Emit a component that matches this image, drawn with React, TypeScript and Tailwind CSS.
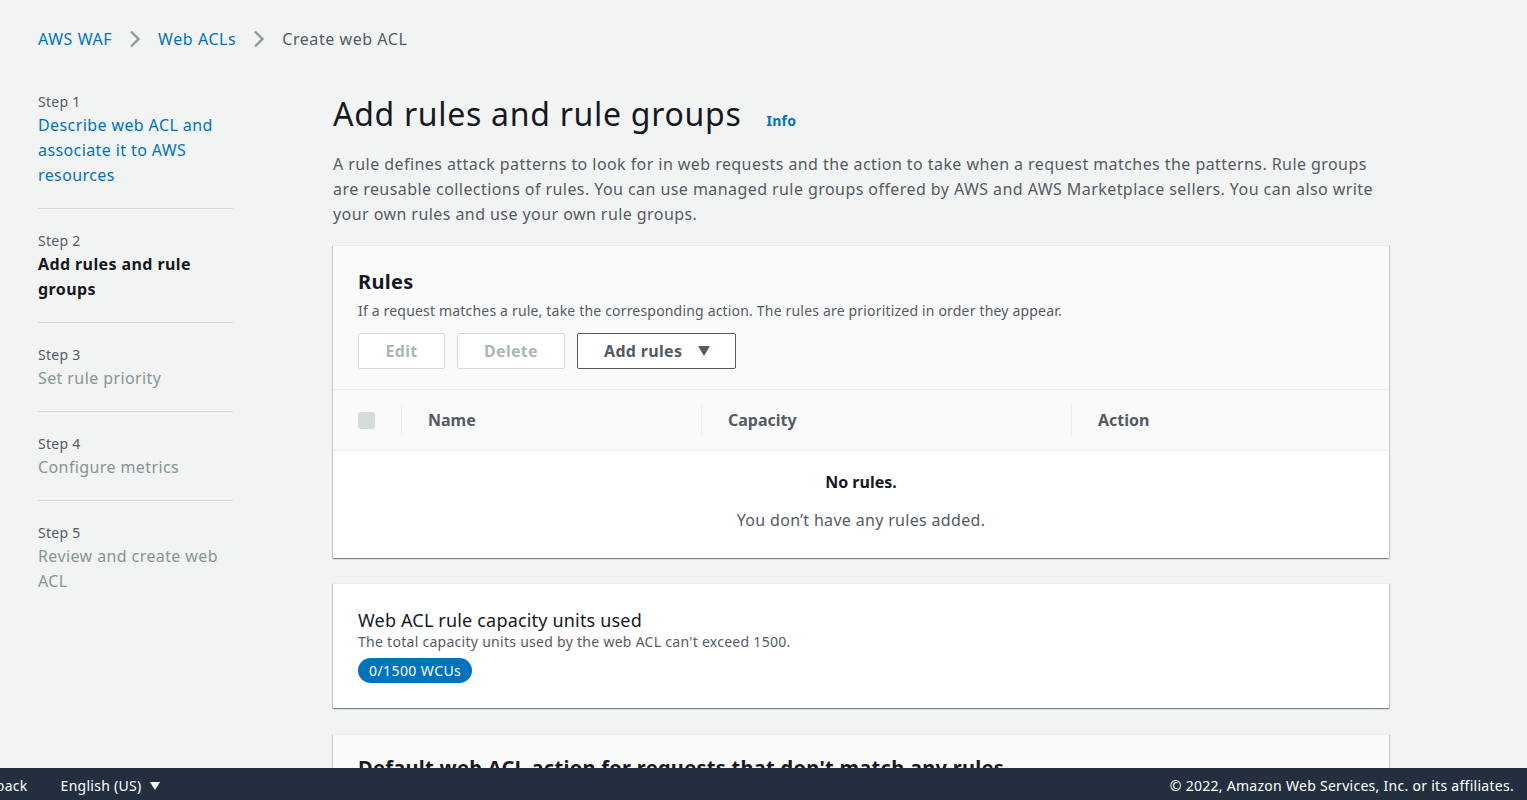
const font = { fontFamily: '"Noto Sans", "Open Sans", sans-serif' }

type Step = {
  label: string
  title: string
  state: 'done' | 'current' | 'todo'
}

const steps: Step[] = [
  { label: 'Step 1', title: 'Describe web ACL and associate it to AWS resources', state: 'done' },
  { label: 'Step 2', title: 'Add rules and rule groups', state: 'current' },
  { label: 'Step 3', title: 'Set rule priority', state: 'todo' },
  { label: 'Step 4', title: 'Configure metrics', state: 'todo' },
  { label: 'Step 5', title: 'Review and create web ACL', state: 'todo' },
]

const panel =
  'border-t border-[#eaeded] shadow-[0_1px_1px_0_rgba(0,28,36,0.3),1px_1px_1px_0_rgba(0,28,36,0.15),-1px_1px_1px_0_rgba(0,28,36,0.15)]'

function Chevron() {
  return (
    <svg viewBox="0 0 12 18" className="mx-[17px] h-[18px] w-[12px]" fill="none">
      <path d="M2 1.5 9.5 9 2 16.5" stroke="#8d9a9b" strokeWidth="2.4" />
    </svg>
  )
}

function Breadcrumbs() {
  return (
    <nav className="flex items-center text-[16px] leading-[20px] tracking-[0.035em]">
      <a className="text-[#0073bb]">AWS WAF</a>
      <Chevron />
      <a className="text-[#0073bb]">Web ACLs</a>
      <Chevron />
      <span className="text-[#545b64]">Create web ACL</span>
    </nav>
  )
}

function StepNav() {
  return (
    <ol className="w-[195px] shrink-0">
      {steps.map((step, i) => (
        <li
          key={step.label}
          className={'pb-[20px] ' + (i > 0 ? 'border-t border-[#d5dbdb] pt-[21px]' : '')}
        >
          <div className="text-[14px] leading-[22px] tracking-[0.02em] text-[#545b64]">{step.label}</div>
          <div
            className={
              'text-[16px] leading-[25px] tracking-[0.025em] ' +
              (step.state === 'done'
                ? 'text-[#0073bb]'
                : step.state === 'current'
                  ? 'font-bold text-[#16191f]'
                  : 'text-[#879596]')
            }
          >
            {step.title}
          </div>
        </li>
      ))}
    </ol>
  )
}

function RulesPanel() {
  return (
    <div className={panel + ' bg-white'}>
      <div className="border-b border-[#eaeded] bg-[#fafafa] px-[25px] pt-[24px] pb-[20px]">
        <h2 className="text-[20px] font-bold leading-[24px] tracking-[0.015em] text-[#16191f]">Rules</h2>
        <p className="mt-[7px] text-[14px] leading-[20px] tracking-[0.013em] text-[#545b64]">
          If a request matches a rule, take the corresponding action. The rules are prioritized in order they appear.
        </p>
        <div className="mt-[12px] flex gap-[12px] text-[16px] font-bold tracking-[0.02em]">
          <button className="h-[36px] w-[87px] rounded-[2px] border border-[#d5dbdb] bg-white text-[#aab7b8]">
            Edit
          </button>
          <button className="h-[36px] w-[108px] rounded-[2px] border border-[#d5dbdb] bg-white text-[#aab7b8]">
            Delete
          </button>
          <button className="flex h-[36px] items-center rounded-[2px] border border-[#545b64] bg-white pl-[26px] pr-[25px] text-[#545b64]">
            Add rules
            <svg viewBox="0 0 12 10" className="ml-[16px] h-[10px] w-[12px]" fill="#545b64">
              <path d="M0 0h12L6 10z" />
            </svg>
          </button>
        </div>
      </div>
      <div className="grid h-[61px] grid-cols-[68px_300px_370px_1fr] border-b border-[#eaeded] bg-[#fafafa] text-[16px] font-bold text-[#545b64]">
        <div className="flex items-center pl-[25px]">
          <span className="h-[17px] w-[17px] rounded-[3px] bg-[#d5dbdb]" />
        </div>
        <div className="flex items-center">
          <div className="flex h-[30px] items-center border-l border-[#eaeded] pl-[26px]">Name</div>
        </div>
        <div className="flex items-center">
          <div className="flex h-[30px] items-center border-l border-[#eaeded] pl-[26px]">Capacity</div>
        </div>
        <div className="flex items-center">
          <div className="flex h-[30px] items-center border-l border-[#eaeded] pl-[26px]">Action</div>
        </div>
      </div>
      <div className="pt-[21px] pb-[28px] text-center text-[16px] leading-[20px]">
        <div className="font-bold text-[#16191f]">No rules.</div>
        <div className="mt-[18px] tracking-[0.02em] text-[#545b64]">You don’t have any rules added.</div>
      </div>
    </div>
  )
}

function CapacityPanel() {
  return (
    <div className={panel + ' mt-[25px] bg-white px-[25px] pt-[25px] pb-[25px]'}>
      <h3 className="text-[18px] leading-[22px] tracking-[0.01em] text-[#16191f]">Web ACL rule capacity units used</h3>
      <p className="mt-[1px] text-[14px] leading-[20px] tracking-[0.02em] text-[#545b64]">
        The total capacity units used by the web ACL can't exceed 1500.
      </p>
      <span className="mt-[6px] inline-flex h-[25px] items-center rounded-full bg-[#0073bb] px-[11px] text-[14px] tracking-[0.03em] text-white">
        0/1500 WCUs
      </span>
    </div>
  )
}

function DefaultActionPanel() {
  return (
    <div className={panel + ' mt-[26px] bg-[#fafafa] px-[25px] pt-[21px] pb-[24px]'}>
      <h2 className="text-[20px] font-bold leading-[24px] tracking-[0.015em] text-[#16191f]">
        Default web ACL action for requests that don't match any rules
      </h2>
    </div>
  )
}

function Footer() {
  return (
    <footer className="fixed inset-x-0 bottom-0 flex h-[32px] items-center justify-between overflow-hidden bg-[#232f3e] pt-[3px] pr-[13px] text-[14px] tracking-[0.02em] text-white">
      <div className="flex items-center whitespace-nowrap">
        <span className="-ml-[37px]">Feedback</span>
        <span className="ml-[33px] flex items-center">
          English (US)
          <svg viewBox="0 0 10 8" className="ml-[8px] h-[8px] w-[10px]" fill="white">
            <path d="M0 0h10L5 8z" />
          </svg>
        </span>
      </div>
      <span>© 2022, Amazon Web Services, Inc. or its affiliates.</span>
    </footer>
  )
}

export default function App() {
  return (
    <div style={font} className="min-h-screen bg-[#f2f3f3] pb-[60px] pl-[38px] pr-[138px] pt-[29px]">
      <Breadcrumbs />
      <div className="mt-[42px] flex">
        <StepNav />
        <main className="ml-[100px] min-w-0 flex-1 pt-[3px]">
          <div className="flex items-baseline gap-[25px]">
            <h1 className="text-[32px] leading-[40px] tracking-[0.022em] text-[#16191f]">Add rules and rule groups</h1>
            <a className="text-[14px] font-bold tracking-[0.02em] text-[#0073bb]">Info</a>
          </div>
          <p className="mt-[18px] text-[16px] leading-[25px] tracking-[0.027em] text-[#545b64]">
            A rule defines attack patterns to look for in web requests and the action to take when a request matches
            the patterns. Rule groups are reusable collections of rules. You can use managed rule groups offered by AWS
            and AWS Marketplace sellers. You can also write your own rules and use your own rule groups.
          </p>
          <div className="mt-[18px]">
            <RulesPanel />
            <CapacityPanel />
            <DefaultActionPanel />
          </div>
        </main>
      </div>
      <Footer />
    </div>
  )
}
